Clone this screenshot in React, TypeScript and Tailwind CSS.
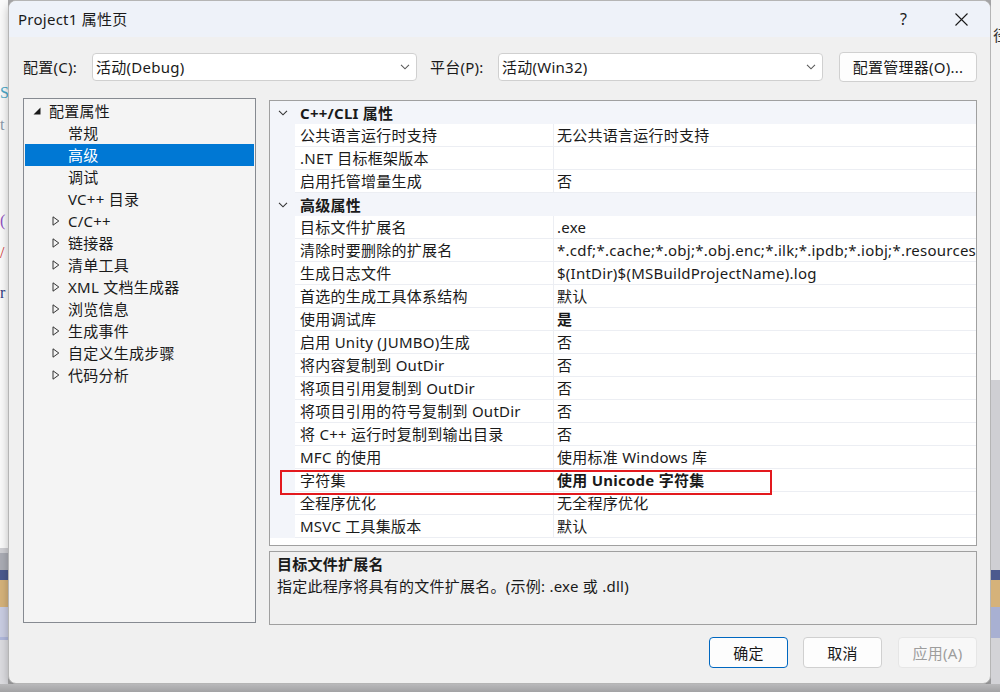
import React from "react";

type GridRow =
  | { kind: "cat"; label: string }
  | { kind: "prop"; name: string; value: string; bold?: boolean };

const ROWS: GridRow[] = [
  { kind: "cat", label: "C++/CLI 属性" },
  { kind: "prop", name: "公共语言运行时支持", value: "无公共语言运行时支持" },
  { kind: "prop", name: ".NET 目标框架版本", value: "" },
  { kind: "prop", name: "启用托管增量生成", value: "否" },
  { kind: "cat", label: "高级属性" },
  { kind: "prop", name: "目标文件扩展名", value: ".exe" },
  {
    kind: "prop",
    name: "清除时要删除的扩展名",
    value:
      "*.cdf;*.cache;*.obj;*.obj.enc;*.ilk;*.ipdb;*.iobj;*.resources;*.tlb;*.tli;*.tlh;*.tmp;*.rsp;*.pgc;*.pgd;*.meta;*.tlog",
  },
  { kind: "prop", name: "生成日志文件", value: "$(IntDir)$(MSBuildProjectName).log" },
  { kind: "prop", name: "首选的生成工具体系结构", value: "默认" },
  { kind: "prop", name: "使用调试库", value: "是", bold: true },
  { kind: "prop", name: "启用 Unity (JUMBO)生成", value: "否" },
  { kind: "prop", name: "将内容复制到 OutDir", value: "否" },
  { kind: "prop", name: "将项目引用复制到 OutDir", value: "否" },
  { kind: "prop", name: "将项目引用的符号复制到 OutDir", value: "否" },
  { kind: "prop", name: "将 C++ 运行时复制到输出目录", value: "否" },
  { kind: "prop", name: "MFC 的使用", value: "使用标准 Windows 库" },
  { kind: "prop", name: "字符集", value: "使用 Unicode 字符集", bold: true },
  { kind: "prop", name: "全程序优化", value: "无全程序优化" },
  { kind: "prop", name: "MSVC 工具集版本", value: "默认" },
];

const TREE: { label: string; level: number; icon?: "open" | "closed"; selected?: boolean }[] = [
  { label: "配置属性", level: 0, icon: "open" },
  { label: "常规", level: 1 },
  { label: "高级", level: 1, selected: true },
  { label: "调试", level: 1 },
  { label: "VC++ 目录", level: 1 },
  { label: "C/C++", level: 1, icon: "closed" },
  { label: "链接器", level: 1, icon: "closed" },
  { label: "清单工具", level: 1, icon: "closed" },
  { label: "XML 文档生成器", level: 1, icon: "closed" },
  { label: "浏览信息", level: 1, icon: "closed" },
  { label: "生成事件", level: 1, icon: "closed" },
  { label: "自定义生成步骤", level: 1, icon: "closed" },
  { label: "代码分析", level: 1, icon: "closed" },
];

function Chevron({ color = "#333" }: { color?: string }) {
  return (
    <svg width="10" height="6" viewBox="0 0 10 6">
      <path d="M1 0.8 L5 4.8 L9 0.8" fill="none" stroke={color} strokeWidth="1.1" />
    </svg>
  );
}

function ComboBox({ text }: { text: string }) {
  return (
    <div className="w-[325px] h-[28px] mt-px bg-white border border-[#d0d0d0] rounded-[4px] flex items-center pl-[3px] pr-[6px]">
      <span className="flex-1">{text}</span>
      <Chevron color="#5a5a5a" />
    </div>
  );
}

function TreeIcon({ icon }: { icon?: "open" | "closed" }) {
  if (icon === "open")
    return (
      <svg width="8" height="8" viewBox="0 0 8 8">
        <path d="M7.5 0.5 L7.5 7.5 L0.5 7.5 Z" fill="#1a1a1a" />
      </svg>
    );
  if (icon === "closed")
    return (
      <svg width="8" height="10" viewBox="0 0 8 10">
        <path d="M1 0.8 L6.8 5 L1 9.2 Z" fill="none" stroke="#333" strokeWidth="1" />
      </svg>
    );
  return null;
}

function Tree() {
  return (
    <div className="w-[233px] h-[525px] shrink-0 bg-[#f4f4f4] border border-[#868a91] px-px pt-px">
      {TREE.map((t) => (
        <div
          key={t.label}
          className={`h-[22px] flex items-center whitespace-nowrap ${t.level === 0 ? "pl-[4px]" : "pl-[23px]"} ${
            t.selected ? "bg-[#0078d4] text-white" : ""
          }`}
        >
          <span className="w-[16px] flex justify-center">
            <TreeIcon icon={t.icon} />
          </span>
          <span className="ml-[4px]">{t.label}</span>
        </div>
      ))}
    </div>
  );
}

function PropertyGrid() {
  return (
    <div className="relative w-[708px] h-[446px] bg-white border border-[#a0a0a0] flex flex-col overflow-hidden">
      {ROWS.map((r, i) =>
        r.kind === "cat" ? (
          <div key={i} className="h-[23px] shrink-0 flex items-center bg-[#f3f5fa]">
            <span className="w-[25px] flex justify-center">
              <Chevron />
            </span>
            <span className="pl-[5px] font-bold">{r.label}</span>
          </div>
        ) : (
          <div key={i} className="h-[23px] shrink-0 flex">
            <div className="w-[25px] shrink-0 bg-[#f3f5fa]" />
            <div className="w-[259px] shrink-0 pl-[5px] flex items-center whitespace-nowrap overflow-hidden border-b border-r border-[#eceef3]">
              {r.name}
            </div>
            <div
              className={`flex-1 pl-[3px] flex items-center whitespace-nowrap overflow-hidden border-b border-[#eceef3] ${
                r.bold ? "font-bold" : ""
              }`}
            >
              {r.value}
            </div>
          </div>
        )
      )}
      <div className="flex-1 bg-white" />
      {/* highlight annotation */}
      <div className="absolute left-[10px] top-[369px] w-[492px] h-[25px] border-2 border-[#e3191e]" />
    </div>
  );
}

function Description() {
  return (
    <div className="w-[708px] h-[74px] bg-[#f0f0f0] border border-[#a0a0a0] px-[7px] pt-px leading-[22px]">
      <div className="font-bold">目标文件扩展名</div>
      <div>指定此程序将具有的文件扩展名。(示例: .exe 或 .dll)</div>
    </div>
  );
}

function Dialog() {
  return (
    <div className="w-[983px] h-full shrink-0 flex flex-col bg-[#f0f0f0] border border-[#b5b5b5] rounded-lg overflow-hidden shadow-[0_4px_10px_rgba(0,0,0,0.25)]">
      <div className="h-[36px] shrink-0 bg-[#eef2f9] flex items-center">
        <span className="flex-1 pl-[9px]">Project1 属性页</span>
        <span className="w-[57px] flex justify-center text-[16px]">?</span>
        <span className="w-[58px] flex justify-center">
          <svg width="13" height="13" viewBox="0 0 13 13">
            <path d="M0.5 0.5 L12.5 12.5 M12.5 0.5 L0.5 12.5" stroke="#1a1a1a" strokeWidth="1.1" />
          </svg>
        </span>
      </div>

      <div className="flex-1 flex flex-col pl-[14px] pr-[13px] pt-[15px]">
        <div className="h-[30px] flex items-start">
          <span className="w-[69px] h-[30px] flex items-center">配置(C):</span>
          <ComboBox text="活动(Debug)" />
          <span className="w-[68px] h-[30px] ml-[13px] flex items-center">平台(P):</span>
          <ComboBox text="活动(Win32)" />
          <button className="ml-[16px] w-[138px] h-[30px] bg-[#fdfdfd] border border-[#d0d0d0] rounded-[4px]">
            配置管理器(O)...
          </button>
        </div>

        <div className="mt-[16px] flex items-start">
          <Tree />
          <div className="ml-[13px] pt-[2px] flex flex-col gap-[5px]">
            <PropertyGrid />
            <Description />
          </div>
        </div>

        <div className="mt-[12px] flex justify-end">
          <button className="w-[79px] h-[31px] bg-[#fdfdfd] border border-[#0067c0] rounded-[4px]">确定</button>
          <button className="ml-[15px] w-[79px] h-[31px] bg-[#fdfdfd] border border-[#d0d0d0] rounded-[4px]">取消</button>
          <button className="ml-[16px] w-[79px] h-[31px] bg-[#f8f8f8] border border-[#e6e6e6] rounded-[4px] text-[#9d9d9d]">
            应用(A)
          </button>
        </div>
      </div>
    </div>
  );
}

function LeftStrip() {
  return (
    <div className="w-[8px] shrink-0 flex flex-col overflow-hidden text-[16px] font-['Liberation_Serif',serif]">
      <div className="h-[548px] bg-[#fafafa] flex flex-col items-start">
        <div className="h-[84px]" />
        <div className="h-[18px] text-[#4aa8c8] leading-[18px]">S</div>
        <div className="h-[14px]" />
        <div className="h-[18px] text-[#8a98a8] leading-[18px]">t</div>
        <div className="h-[80px]" />
        <div className="h-[14px] text-[#9050c0] leading-[14px]">(</div>
        <div className="h-[18px]" />
        <div className="h-[14px] text-[#d03030] leading-[14px]">/</div>
        <div className="h-[24px]" />
        <div className="h-[18px] text-[#303a80] leading-[18px]">r</div>
      </div>
      <div className="h-[5px] bg-[#cfcfd3]" />
      <div className="h-[17px] bg-[#aaacb4]" />
      <div className="h-[10px] bg-[#4b5a8e]" />
      <div className="h-[27px] bg-[#d5b27a]" />
      <div className="h-[30px] bg-[#c9cde2]" />
      <div className="h-[3px] bg-[#b0b8dc]" />
      <div className="flex-1 bg-[#dcdce0]" />
    </div>
  );
}

function RightStrip() {
  return (
    <div className="w-[9px] shrink-0 flex flex-col overflow-hidden">
      <div className="h-[380px] bg-[#f3f3f3]">
        <div className="mt-[27px] ml-[2px] text-[15px] leading-[16px] text-[#333]">径</div>
      </div>
      <div className="h-[190px] bg-[#cfcfd3]" />
      <div className="h-[10px] bg-[#4b5a8e]" />
      <div className="h-[27px] bg-[#d5b27a]" />
      <div className="h-[31px] bg-[#a8b0d2]" />
      <div className="flex-1 bg-[#d3d3d7]" />
    </div>
  );
}

export default function App() {
  return (
    <div className="w-[1000px] h-[692px] overflow-hidden flex flex-col bg-[#a9a9ab] font-['Noto_Sans','Noto_Sans_CJK_SC',sans-serif] text-[15px] leading-[22px] tracking-[0.25px] text-[#1a1a1a]">
      <div className="h-[684px] shrink-0 flex">
        <LeftStrip />
        <Dialog />
        <RightStrip />
      </div>
      <div className="flex-1 bg-gradient-to-b from-[#b9b9bb] to-[#a2a2a4]" />
    </div>
  );
}
